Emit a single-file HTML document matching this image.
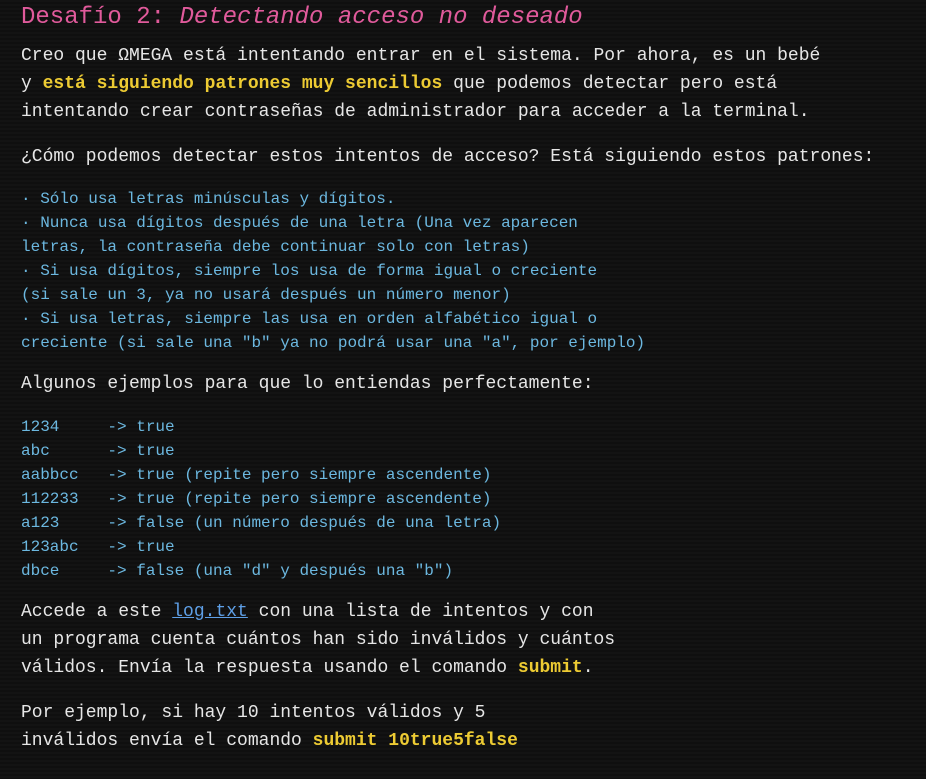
<!DOCTYPE html>
<html><head><meta charset="utf-8"><style>
html,body{margin:0;padding:0;width:926px;height:779px;overflow:hidden;background:#121212;}
body{background:repeating-linear-gradient(#131313 0,#131313 2px,#0f0f0f 2px,#0f0f0f 4px);font-family:"Liberation Mono",monospace;position:relative;}
.l{position:absolute;left:21px;white-space:pre;}
.t{font-size:24px;color:#e05a9b;height:36px;line-height:36px;}
.p{font-size:18px;color:#e6e6e6;line-height:28px;}
.c{font-size:16px;color:#6cb8e0;line-height:24px;}
.y{color:#edcb33;font-weight:bold;}
a{color:#5e9fe6;text-decoration:underline;}
</style></head><body>
<div class="l t" style="top:0px">Desafío 2: <i>Detectando acceso no deseado</i></div>
<div class="l p" style="top:42px">Creo que ΩMEGA está intentando entrar en el sistema. Por ahora, es un bebé
y <span class="y">está siguiendo patrones muy sencillos</span> que podemos detectar pero está
intentando crear contraseñas de administrador para acceder a la terminal.</div>
<div class="l p" style="top:143px">¿Cómo podemos detectar estos intentos de acceso? Está siguiendo estos patrones:</div>
<div class="l c" style="top:187px">· Sólo usa letras minúsculas y dígitos.
· Nunca usa dígitos después de una letra (Una vez aparecen
letras, la contraseña debe continuar solo con letras)
· Si usa dígitos, siempre los usa de forma igual o creciente
(si sale un 3, ya no usará después un número menor)
· Si usa letras, siempre las usa en orden alfabético igual o
creciente (si sale una "b" ya no podrá usar una "a", por ejemplo)</div>
<div class="l p" style="top:370px">Algunos ejemplos para que lo entiendas perfectamente:</div>
<div class="l c" style="top:415px">1234     -> true
abc      -> true
aabbcc   -> true (repite pero siempre ascendente)
112233   -> true (repite pero siempre ascendente)
a123     -> false (un número después de una letra)
123abc   -> true
dbce     -> false (una "d" y después una "b")</div>
<div class="l p" style="top:598px">Accede a este <a>log.txt</a> con una lista de intentos y con
un programa cuenta cuántos han sido inválidos y cuántos
válidos. Envía la respuesta usando el comando <span class="y">submit</span>.</div>
<div class="l p" style="top:699px">Por ejemplo, si hay 10 intentos válidos y 5
inválidos envía el comando <span class="y">submit 10true5false</span></div>
</body></html>
